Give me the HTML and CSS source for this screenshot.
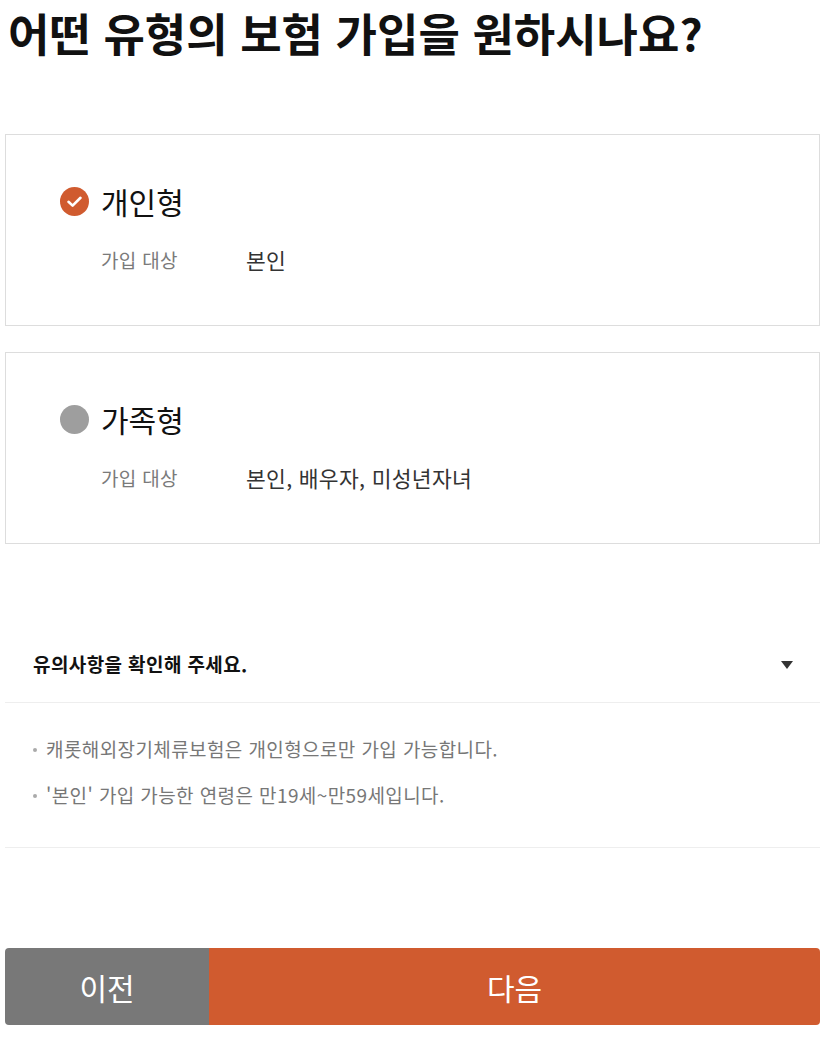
FILE: index.html
```html
<!DOCTYPE html>
<html lang="ko">
<head>
<meta charset="utf-8">
<link rel="stylesheet" href="styles.css">
</head>
<body>
<div class="page">
  <h1 class="title">어떤 유형의 보험 가입을 원하시나요?</h1>

  <div class="card">
    <div class="card-head">
      <span class="radio checked">
        <svg width="29" height="29" viewBox="0 0 29 29"><circle cx="14.5" cy="14.5" r="14.5" fill="#d05b2f"/><path d="M8.5 14.8 L12.6 18.6 L20.5 10.8" fill="none" stroke="#fff" stroke-width="2.6" stroke-linecap="round" stroke-linejoin="round"/></svg>
      </span>
      <span class="card-title">개인형</span>
    </div>
    <div class="card-row">
      <span class="label">가입 대상</span>
      <span class="value">본인</span>
    </div>
  </div>

  <div class="card">
    <div class="card-head">
      <span class="radio">
        <svg width="29" height="29" viewBox="0 0 29 29"><circle cx="14.5" cy="14.5" r="14.5" fill="#9e9e9e"/></svg>
      </span>
      <span class="card-title">가족형</span>
    </div>
    <div class="card-row">
      <span class="label">가입 대상</span>
      <span class="value">본인, 배우자, 미성년자녀</span>
    </div>
  </div>

  <div class="notice">
    <div class="notice-head">
      <span class="notice-title">유의사항을 확인해 주세요.</span>
      <span class="caret"></span>
    </div>
    <ul class="notice-list">
      <li>캐롯해외장기체류보험은 개인형으로만 가입 가능합니다.</li>
      <li>'본인' 가입 가능한 연령은 만19세~만59세입니다.</li>
    </ul>
  </div>

  <div class="buttons">
    <button class="btn prev">이전</button>
    <button class="btn next">다음</button>
  </div>
</div>
</body>
</html>
```

FILE: styles.css
```css
* { box-sizing: border-box; }
html, body { margin: 0; padding: 0; background: #fff; }
body {
  font-family: "Noto Sans CJK KR", "Noto Sans", sans-serif;
  color: #111;
}
.page {
  width: 828px;
  padding: 0 8px 0 5px;
}
.title {
  margin: 0;
  padding: 5px 0 0 3px;
  font-size: 45px;
  line-height: 56px;
  font-weight: 700;
  letter-spacing: 0;
  color: #111;
  height: 134px;
}
.card {
  border: 1px solid #ddd;
  height: 192px;
  padding: 47px 0 0 54px;
}
.card + .card { margin-top: 26px; }
.card-head {
  display: flex;
  align-items: center;
  gap: 12px;
  height: 38px;
}
.radio { display: flex; width: 29px; height: 29px; }
.card-title {
  font-size: 30px;
  line-height: 38px;
  color: #111;
}
.card-row {
  display: flex;
  margin-top: 26px;
  padding-left: 41px;
  align-items: center;
  height: 26px;
}
.label {
  width: 145px;
  font-size: 19px;
  letter-spacing: 0.3px;
  color: #7a7a7a;
}
.value {
  font-size: 21.5px;
  letter-spacing: 0.3px;
  font-weight: 400;
  color: #333;
}
.notice { margin-top: 80px; }
.notice-head {
  display: flex;
  align-items: center;
  justify-content: space-between;
  height: 79px;
  padding: 0 27px 0 28px;
  border-bottom: 1px solid #eee;
}
.notice-title {
  font-size: 19px;
  font-weight: 700;
  color: #111;
  letter-spacing: 0.4px;
}
.caret {
  width: 0; height: 0;
  border-left: 6.5px solid transparent;
  border-right: 6.5px solid transparent;
  border-top: 8px solid #333;
  margin-top: 4px;
}
.notice-list {
  list-style: none;
  margin: 0;
  padding: 23px 0 29px 28px;
  border-bottom: 1px solid #eee;
}
.notice-list li {
  position: relative;
  padding-left: 13px;
  font-size: 19px;
  line-height: 46px;
  color: #777;
  letter-spacing: 0.4px;
}
.notice-list li::before {
  content: "";
  position: absolute;
  left: 0; top: 22px;
  width: 4px; height: 4px;
  border-radius: 50%;
  background: #aaa;
}
.buttons {
  display: flex;
  margin-top: 100px;
  height: 77px;
  border-radius: 4px;
  overflow: hidden;
}
.btn {
  border: 0;
  margin: 0;
  font-family: inherit;
  font-size: 30px;
  color: #fff;
  cursor: pointer;
}
.prev { width: 204px; background: #787878; }
.next { flex: 1; background: #d05b2f; }
```
